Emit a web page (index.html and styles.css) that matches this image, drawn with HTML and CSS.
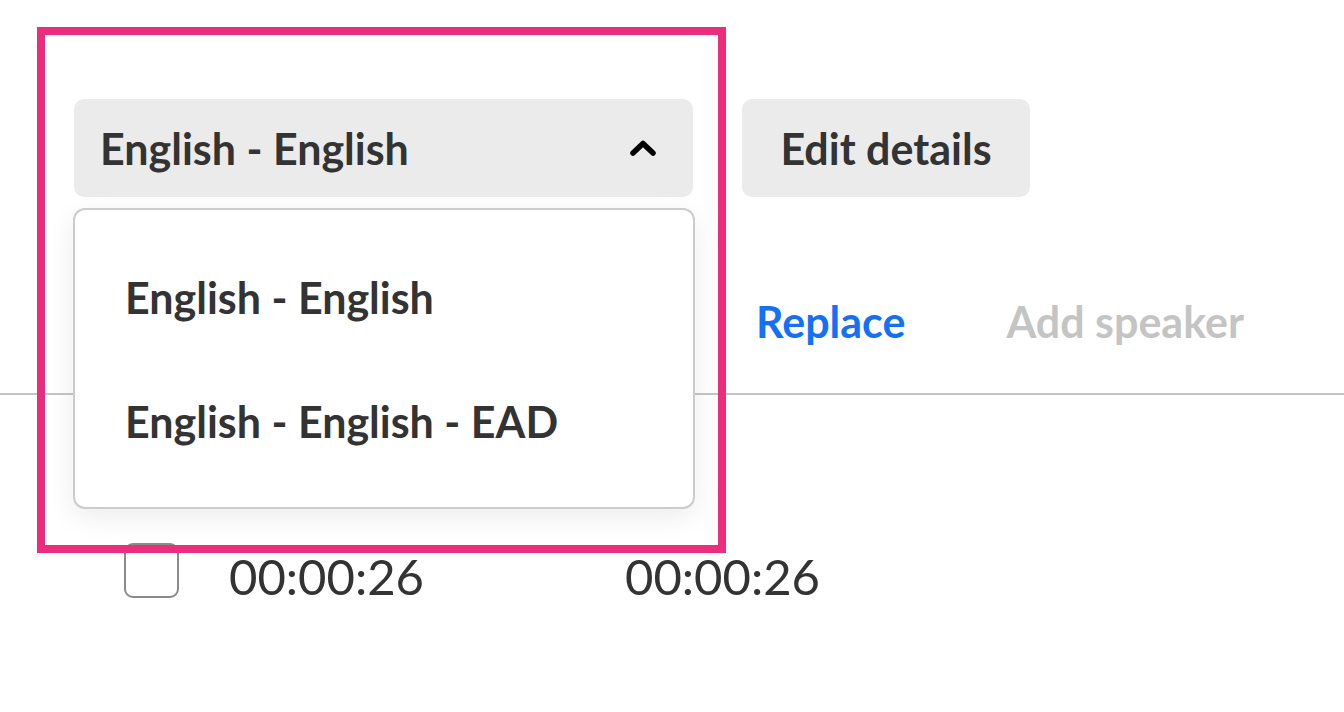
FILE: index.html
```html
<!DOCTYPE html>
<html lang="en">
<head>
<meta charset="utf-8">
<title>Language select</title>
<link rel="stylesheet" href="styles.css">
</head>
<body>
<div class="page">
  <div class="top-row">
    <div class="select-wrap">
      <button class="select">
        <span>English - English</span>
        <svg class="chev" width="28" height="18" viewBox="0 0 28 18"><path d="M4 14 L14 4.5 L24 14" fill="none" stroke="#000" stroke-width="5.5" stroke-linecap="round" stroke-linejoin="round"/></svg>
      </button>
      <div class="menu">
        <div class="menu-item">English - English</div>
        <div class="menu-item">English - English - EAD</div>
      </div>
    </div>
    <button class="btn">Edit details</button>
  </div>
  <div class="toolbar">
    <span class="tool tool-active">Replace</span>
    <span class="tool tool-disabled">Add speaker</span>
  </div>
  <div class="row">
    <span class="checkbox"></span>
    <span class="time">00:00:26</span>
    <span class="time">00:00:26</span>
  </div>
  <div class="highlight"></div>
</div>
</body>
</html>
```

FILE: styles.css
```css
html, body {
  margin: 0;
  padding: 0;
  background: #ffffff;
}
body {
  font-family: Lato, "Open Sans", "Liberation Sans", sans-serif;
  color: #333333;
  width: 1344px;
  height: 712px;
  overflow: hidden;
}
.page {
  position: relative;
  height: 712px;
}
.top-row {
  display: flex;
  gap: 49px;
  padding: 99px 0 0 74px;
}
.select-wrap {
  position: relative;
}
.select {
  width: 619px;
  height: 98px;
  border: none;
  border-radius: 10px;
  background: #ebebeb;
  display: flex;
  align-items: center;
  justify-content: space-between;
  padding: 0 36px 0 26px;
  font-family: inherit;
  font-size: 43px;
  font-weight: 700;
  color: #333333;
  box-sizing: border-box;
}
.chev {
  display: block;
  margin-top: -1px;
}
.btn {
  width: 288px;
  height: 98px;
  border: none;
  border-radius: 10px;
  background: #ebebeb;
  font-family: inherit;
  font-size: 43px;
  font-weight: 700;
  color: #333333;
  padding: 0;
}
.menu {
  position: absolute;
  top: 109px;
  left: -1px;
  width: 622px;
  height: 301px;
  box-sizing: border-box;
  background: #ffffff;
  border: 2px solid #cccccc;
  border-radius: 12px;
  box-shadow: 0 8px 28px rgba(0, 0, 0, 0.08);
  padding: 25px 0;
  z-index: 2;
}
.menu-item {
  height: 124px;
  display: flex;
  align-items: center;
  padding-left: 50px;
  font-size: 43px;
  font-weight: 700;
  color: #333333;
}
.toolbar {
  display: flex;
  gap: 101px;
  align-items: flex-end;
  height: 198px;
  padding: 0 0 45px 756px;
  box-sizing: border-box;
  border-bottom: 2px solid #c4c4c4;
}
.tool {
  font-size: 43px;
  font-weight: 700;
  line-height: 52px;
}
.tool-active {
  color: #1470f5;
}
.tool-disabled {
  color: #c4c4c4;
}
.row {
  display: flex;
  align-items: center;
  padding: 140px 0 0 124px;
}
.checkbox {
  width: 55px;
  height: 55px;
  box-sizing: border-box;
  border: 2.5px solid #8a8a8a;
  border-radius: 9px;
  margin-right: 50px;
}
.time {
  font-size: 49px;
  font-weight: 400;
  color: #333333;
  width: 396px;
  line-height: 58px;
  margin-top: 12px;
}
.highlight {
  position: absolute;
  left: 37px;
  top: 27px;
  width: 689px;
  height: 526px;
  box-sizing: border-box;
  border: 8px solid #ea2e7d;
  z-index: 3;
  pointer-events: none;
}
```
